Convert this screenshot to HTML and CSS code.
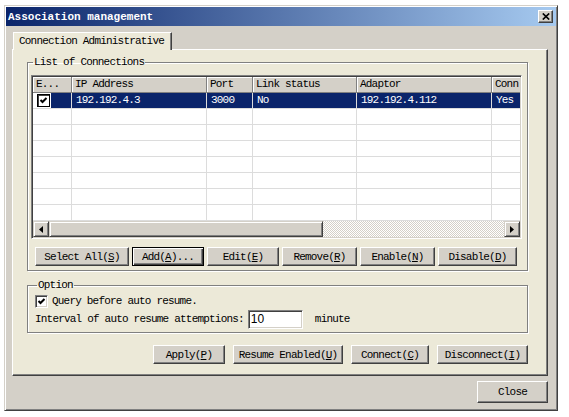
FILE: index.html
```html
<!DOCTYPE html>
<html lang="en">
<head>
    <meta charset="UTF-8">
    <meta name="viewport" content="width=device-width, initial-scale=1.0">
    <title>Association management</title>
    <link rel="stylesheet" href="styles.css">
</head>
<body>

<div class="window">
    <div class="titlebar">
        <span class="title">Association management</span>
        <button class="title-close">
            <svg width="8" height="7" viewBox="0 0 8 7"><path d="M0.8 0.5 L7.2 6.5 M7.2 0.5 L0.8 6.5" stroke="#000" stroke-width="1.7"/></svg>
        </button>
    </div>

    <div class="body">
        <div class="tabs">
            <div class="tab">Connection Administrative</div>
        </div>

        <div class="panel">
            <fieldset class="group">
                <legend>List of Connections</legend>

                <div class="list">
                    <div class="viewport">
                        <div class="list-row list-head">
                            <div class="th">E...</div>
                            <div class="th">IP Address</div>
                            <div class="th">Port</div>
                            <div class="th">Link status</div>
                            <div class="th">Adaptor</div>
                            <div class="th">Conn</div>
                        </div>
                        <div id="rows"></div>
                    </div>
                    <div class="hscroll">
                        <div class="sb-btn"><svg width="4" height="7" viewBox="0 0 4 7"><path d="M4 0V7L0 3.5Z"/></svg></div>
                        <div class="sb-thumb"></div>
                        <div class="sb-track"></div>
                        <div class="sb-btn"><svg width="4" height="7" viewBox="0 0 4 7"><path d="M0 0V7L4 3.5Z"/></svg></div>
                    </div>
                </div>

                <div class="btn-row">
                    <button class="btn w94">Select All(<u>S</u>)</button>
                    <button class="btn default w72">Add(<u>A</u>)...</button>
                    <button class="btn w72">Edit(<u>E</u>)</button>
                    <button class="btn w75">Remove(<u>R</u>)</button>
                    <button class="btn w75">Enable(<u>N</u>)</button>
                    <button class="btn w79">Disable(<u>D</u>)</button>
                </div>
            </fieldset>

            <fieldset class="group option">
                <legend>Option</legend>
                <label class="check-row">
                    <span class="checkbox sunken">
                        <svg width="9" height="9" viewBox="0 0 9 9"><path d="M1.5 4 L3.5 6 L7.5 2" fill="none" stroke="#000" stroke-width="2"/></svg>
                    </span>
                    Query before auto resume.
                </label>
                <div class="interval-row">
                    <span>Interval of auto resume attemptions:</span>
                    <input class="num" type="text" value="10">
                    <span class="unit">minute</span>
                </div>
            </fieldset>

            <div class="action-row">
                <button class="btn w72">Apply(<u>P</u>)</button>
                <button class="btn w110">Resume Enabled(<u>U</u>)</button>
                <button class="btn w78">Connect(<u>C</u>)</button>
                <button class="btn w91">Disconnect(<u>I</u>)</button>
            </div>
        </div>

        <div class="footer">
            <button class="btn close-btn">Close</button>
        </div>
    </div>
</div>

<script>
    const connections = [
        { enabled: true, ip: "192.192.4.3", port: "3000", link: "No", adaptor: "192.192.4.112", connected: "Yes" }
    ];
    const visibleRows = 8;

    function renderRows() {
        const rows = document.getElementById("rows");
        rows.innerHTML = "";

        for (let i = 0; i < visibleRows; i++) {
            const item = connections[i];
            const row = document.createElement("div");
            row.className = "list-row";

            if (item) {
                row.classList.add("selected");
                row.innerHTML = `
                    <div class="td check-cell">
                        <span class="checkbox boxed">${item.enabled ? '<svg width="9" height="9" viewBox="0 0 9 9"><path d="M1.5 4 L3.5 6 L7.5 2" fill="none" stroke="#000" stroke-width="2"/></svg>' : ''}</span>
                    </div>
                    <div class="td">${item.ip}</div>
                    <div class="td">${item.port}</div>
                    <div class="td">${item.link}</div>
                    <div class="td">${item.adaptor}</div>
                    <div class="td">${item.connected}</div>
                `;
            } else {
                row.innerHTML = '<div class="td"></div>'.repeat(6);
            }
            rows.appendChild(row);
        }
    }

    renderRows();
</script>

</body>
</html>
```

FILE: styles.css
```css
body {
    margin: 0;
    background: #fff;
    font-family: "Liberation Mono", monospace;
    font-size: 11px;
    letter-spacing: -0.8px;
    color: #000;
}

.window {
    width: 554px;
    height: 406px;
    margin: 5px 0 0 4px;
    box-sizing: border-box;
    padding: 1px;
    background: #d4d0c8;
    border: 1px solid;
    border-color: #d4d0c8 #404040 #404040 #d4d0c8;
    box-shadow: inset 1px 1px #fff, inset -1px -1px #808080;
    display: flex;
    flex-direction: column;
}

.titlebar {
    height: 19px;
    display: flex;
    align-items: center;
    justify-content: space-between;
    padding: 0 3px 0 2px;
    background: linear-gradient(to right, #0a246a, #a6caf0);
}

.title {
    color: #fff;
    font-weight: bold;
    letter-spacing: 0;
}

.title-close {
    width: 15px;
    height: 13px;
    padding: 0;
    display: flex;
    align-items: center;
    justify-content: center;
    background: #d4d0c8;
    border: 1px solid;
    border-color: #fff #404040 #404040 #fff;
    box-shadow: inset -1px -1px #808080;
}

.body {
    padding: 6px 8px 0 6px;
}

.tabs {
    display: flex;
    padding-left: 1px;
}

.tab {
    position: relative;
    z-index: 1;
    width: 159px;
    height: 18px;
    margin-bottom: -1px;
    box-sizing: border-box;
    padding-left: 5px;
    line-height: 17px;
    background: #ece9d8;
    border-top: 1px solid #fff;
    border-left: 1px solid #fff;
    border-right: 1px solid #404040;
    box-shadow: inset -1px 0 #808080;
}

.panel {
    width: 536px;
    height: 327px;
    box-sizing: border-box;
    padding: 6px 19px 0 14px;
    background: #ece9d8;
    border: 1px solid;
    border-color: #fff #404040 #404040 #fff;
    box-shadow: inset -1px -1px #808080;
}

.group {
    margin: 0;
    min-width: 0;
    width: 501px;
    box-sizing: border-box;
    padding: 7px 5px 4px 3px;
    border: 1px solid #808080;
    box-shadow: inset 1px 1px #fff, 1px 1px #fff;
}

.group legend {
    padding: 0 1px;
    margin-left: 2px;
    line-height: 12px;
}

/* list view */
.list {
    width: 491px;
    height: 164px;
    box-sizing: border-box;
    padding: 1px;
    background: #fff;
    border: 1px solid;
    border-color: #808080 #fff #fff #808080;
    box-shadow: inset 1px 1px #404040, inset -1px -1px #d4d0c8;
}

.viewport {
    height: 144px;
    overflow: hidden;
}

.list-row {
    display: grid;
    grid-template-columns: 39px 135px 46px 104px 135px 60px;
    height: 16px;
    white-space: nowrap;
}

.th {
    box-sizing: border-box;
    padding-left: 3px;
    line-height: 15px;
    overflow: hidden;
    background: #d4d0c8;
    border-right: 1px solid #808080;
    border-bottom: 1px solid #808080;
    box-shadow: inset 1px 1px #fff;
}

.td {
    box-sizing: border-box;
    padding-left: 4px;
    line-height: 15px;
    overflow: hidden;
    border-right: 1px solid #dcdcdc;
    border-bottom: 1px solid #dcdcdc;
}

.selected .td {
    background: #0a246a;
    color: #fff;
}

.selected .check-cell {
    background: linear-gradient(to right, #fff 18px, #0a246a 18px);
    padding-top: 1px;
}

.checkbox {
    width: 13px;
    height: 13px;
    box-sizing: border-box;
    display: inline-flex;
    align-items: center;
    justify-content: center;
    background: #fff;
    vertical-align: top;
}

.checkbox.boxed {
    border: 1px solid #000;
    box-shadow: inset 1px 1px #404040;
}

.checkbox.sunken {
    border: 1px solid;
    border-color: #808080 #fff #fff #808080;
    box-shadow: inset 1px 1px #404040, inset -1px -1px #d4d0c8;
}

.hscroll {
    display: flex;
    height: 16px;
}

.sb-btn, .sb-thumb {
    box-sizing: border-box;
    background: #d4d0c8;
    border: 1px solid;
    border-color: #d4d0c8 #404040 #404040 #d4d0c8;
    box-shadow: inset 1px 1px #fff, inset -1px -1px #808080;
}

.sb-btn {
    width: 16px;
    display: flex;
    align-items: center;
    justify-content: center;
}

.sb-thumb {
    width: 274px;
}

.sb-track {
    flex: 1;
    background: repeating-conic-gradient(#fff 0 25%, #d4d0c8 0 50%) 0 0 / 2px 2px;
}

/* buttons */
.btn {
    height: 19px;
    box-sizing: border-box;
    padding: 0;
    font: inherit;
    letter-spacing: inherit;
    color: #000;
    background: #d4d0c8;
    border: 1px solid;
    border-color: #fff #404040 #404040 #fff;
    box-shadow: inset -1px -1px #808080;
    white-space: nowrap;
}

.btn.default {
    border-color: #000;
    box-shadow: inset 1px 1px #fff, inset -1px -1px #404040, inset -2px -2px #808080;
}

.w72 { width: 72px; }
.w75 { width: 75px; }
.w78 { width: 78px; }
.w79 { width: 79px; }
.w91 { width: 91px; }
.w94 { width: 94px; }
.w110 { width: 110px; }

.btn-row {
    display: flex;
    gap: 3px;
    margin-top: 8px;
    padding-left: 4px;
}

.option {
    margin-top: 8px;
    padding: 3px 5px 3px 7px;
}

.check-row {
    display: flex;
    align-items: center;
    gap: 4px;
    height: 14px;
}

.interval-row {
    display: flex;
    align-items: center;
    height: 20px;
    margin-top: 1px;
}

.num {
    width: 55px;
    height: 19px;
    box-sizing: border-box;
    margin-left: 4px;
    padding: 0 2px;
    font-family: "Liberation Sans", Arial, sans-serif;
    font-size: 12px;
    letter-spacing: 0;
    background: #fff;
    border: 1px solid;
    border-color: #808080 #fff #fff #808080;
    box-shadow: inset 1px 1px #404040, inset -1px -1px #d4d0c8;
    outline: none;
}

.unit {
    margin-left: 12px;
}

.action-row {
    display: flex;
    justify-content: flex-end;
    gap: 8px;
    margin-top: 12px;
}

.footer {
    display: flex;
    justify-content: flex-end;
    margin-top: 5px;
}

.close-btn {
    width: 71px;
    height: 22px;
}
```
